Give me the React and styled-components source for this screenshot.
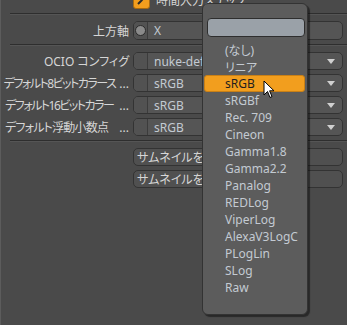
import React from 'react';
import styled, { createGlobalStyle } from 'styled-components';

const GlobalStyle = createGlobalStyle`
  html, body {
    margin: 0;
    padding: 0;
    background: #4a4a4a;
    overflow: hidden;
  }
  body {
    font-family: "Noto Sans", "Noto Sans CJK JP", sans-serif;
    font-size: 12px;
    font-feature-settings: "palt";
  }
`;

const Page = styled.div`
  position: relative;
  width: 347px;
  height: 325px;
  overflow: hidden;
  background: #4a4a4a;
  border-left: 1px solid #5c5c5c;
  box-sizing: border-box;
`;

const Panel = styled.div`
  display: flex;
  flex-direction: column;
  gap: 4px;
  margin-top: -9px;
`;

const Row = styled.div`
  display: grid;
  grid-template-columns: 128px 210px;
  column-gap: 4px;
  align-items: center;
  height: ${p => p.h || 18}px;
`;

const Label = styled.div`
  display: flex;
  justify-content: flex-end;
  align-items: center;
  gap: 4px;
  padding-left: 4px;
  color: #d6d6d6;
  white-space: nowrap;
`;

const LabelText = styled.span`
  flex: ${p => p.spacing !== undefined ? 1 : 'none'};
  letter-spacing: ${p => p.spacing || 0}px;
`;

const Dots = styled.span`
  flex: none;
  color: #d6d6d6;
`;

const Separator = styled.div`
  margin: 0 0 2px 9px;
  height: 0;
  border-top: 1px solid #2e2e2e;
  border-bottom: 1px solid #555;
`;

const Field = styled.div`
  display: flex;
  height: ${p => p.h || 18}px;
  box-sizing: border-box;
  border: 1px solid #333;
  border-radius: 5px;
  background: #555;
  overflow: hidden;
`;

const Segment = styled.div`
  width: 13px;
  display: flex;
  align-items: center;
  justify-content: center;
  border-right: 1px solid #3c3c3c;
  background: #525252;
`;

const Radio = styled.div`
  width: 9px;
  height: 9px;
  border-radius: 50%;
  background: #8a8a8a;
  border: 1px solid #2c2c2c;
`;

const Value = styled.div`
  flex: 1;
  display: flex;
  align-items: center;
  justify-content: space-between;
  padding: 0 7px 0 6px;
  color: #c3cad2;
`;

const Arrow = styled.span`
  width: 0;
  height: 0;
  border-left: 4px solid transparent;
  border-right: 4px solid transparent;
  border-top: 5px solid #d0d0d0;
`;

const CheckRow = styled.div`
  display: flex;
  align-items: center;
  gap: 6px;
  height: 18px;
  padding-left: 132px;
  color: #d6d6d6;
`;

const CheckBox = styled.div`
  width: 17px;
  height: 17px;
  border-radius: 3px;
  background: #f29e1e;
  border: 1px solid #a86a10;
  box-sizing: border-box;
  display: flex;
  align-items: center;
  justify-content: center;
`;

const ButtonRow = styled.div`
  padding-left: 132px;
  height: 18px;
`;

const Button = styled.div`
  height: 18px;
  box-sizing: border-box;
  width: 210px;
  border: 1px solid #333;
  border-radius: 5px;
  background: #505050;
  color: #d6d6d6;
  padding-left: 3px;
  display: flex;
  align-items: center;
  white-space: nowrap;
`;

const Popup = styled.div`
  position: absolute;
  left: 201px;
  top: 3px;
  width: 106px;
  height: 312px;
  box-sizing: border-box;
  background: #5c5c5c;
  border: 1px solid #333;
  border-radius: 6px;
  box-shadow: 2px 2px 1px rgba(0, 0, 0, 0.45);
  padding: 14px 2px 0 1px;
  display: flex;
  flex-direction: column;
`;

const Search = styled.div`
  height: 19px;
  margin: 0 0 4px 3px;
  box-sizing: border-box;
  border: 1px solid #2e2e2e;
  border-radius: 4px;
  background: #9aa1a8;
`;

const Item = styled.div`
  height: 17px;
  box-sizing: border-box;
  display: flex;
  align-items: center;
  padding-left: 20px;
  color: ${p => p.active ? '#1e1e1e' : '#c3cad2'};
  background: ${p => p.active ? '#f29e1e' : 'transparent'};
  border: 1px solid ${p => p.active ? '#c98016' : 'transparent'};
  border-radius: 3px;
  white-space: nowrap;
`;

const Cursor = styled.svg`
  position: absolute;
  left: 262px;
  top: 80px;
`;

const items = [
  '(なし)', 'リニア', 'sRGB', 'sRGBf', 'Rec. 709', 'Cineon', 'Gamma1.8',
  'Gamma2.2', 'Panalog', 'REDLog', 'ViperLog', 'AlexaV3LogC', 'PLogLin',
  'SLog', 'Raw',
];

// labels as the panel shows them, already truncated to fit the column
const selects = [
  { label: 'OCIO コンフィグ', value: 'nuke-default' },
  { label: 'デフォルト8ビットカラース', value: 'sRGB', spacing: -1.5 },
  { label: 'デフォルト16ビットカラー', value: 'sRGB', spacing: -1.5 },
  { label: 'デフォルト浮動小数点', value: 'sRGB', spacing: -0.8 },
];

export default function App() {
  return (
    <Page>
      <GlobalStyle />
      <Panel>
        <CheckRow>
          <CheckBox>
            <svg width="11" height="11" viewBox="0 0 11 11">
              <path d="M2 9 L5 6 M5 6 L9 1.5" stroke="#2a2a2a" strokeWidth="2" fill="none" />
            </svg>
          </CheckBox>
          <span>時間入力ステップ</span>
        </CheckRow>
        <Separator />
        <Row h={19}>
          <Label><LabelText>上方軸</LabelText></Label>
          <Field h={19}>
            <Segment><Radio /></Segment>
            <Value>X</Value>
          </Field>
        </Row>
        <Separator />
        {selects.map(s => (
          <Row key={s.label}>
            <Label>
              <LabelText spacing={s.spacing}>{s.label}</LabelText>
              {s.spacing !== undefined && <Dots>...</Dots>}
            </Label>
            <Field>
              <Segment />
              <Value>{s.value}<Arrow /></Value>
            </Field>
          </Row>
        ))}
        <Separator />
        <ButtonRow><Button>サムネイルを設定</Button></ButtonRow>
        <ButtonRow><Button>サムネイルを設定解除</Button></ButtonRow>
      </Panel>
      <Popup>
        <Search />
        {items.map(it => (
          <Item key={it} active={it === 'sRGB'}>{it}</Item>
        ))}
      </Popup>
      <Cursor width="13" height="19" viewBox="0 0 13 19">
        <path d="M1 1 L1 15 L4.5 11.5 L7 17.5 L9 16.6 L6.6 10.8 L11 10.8 Z" fill="#fff" stroke="#000" strokeWidth="1" />
      </Cursor>
    </Page>
  );
}
